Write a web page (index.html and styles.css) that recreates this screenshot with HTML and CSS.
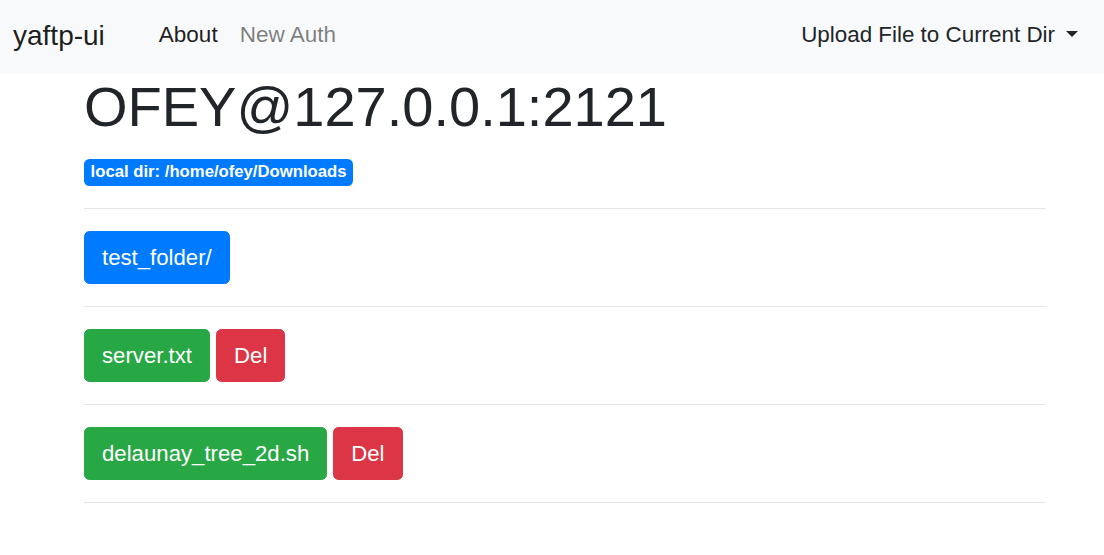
FILE: index.html
```html
<!DOCTYPE html>
<html>
<head>
	<meta charset="utf-8" />
	<title>yaftp-ui</title>
	<link rel="stylesheet" href="styles.css">
</head>
<body>
	<nav class="navbar">
		<a class="brand" href="#">yaftp-ui</a>
		<ul class="nav">
			<li><a class="nav-link active" href="#">About</a></li>
			<li><a class="nav-link" href="#">New Auth</a></li>
		</ul>
		<a class="upload dropdown-toggle" href="#">Upload File to Current Dir</a>
	</nav>
	<div class="main">
		<h1 class="title">OFEY@127.0.0.1:2121</h1>
		<div class="dir-row"><span class="badge">local dir: /home/ofey/Downloads</span></div>
		<hr />
		<div class="row">
			<a class="btn btn-primary" href="#">test_folder/</a>
		</div>
		<hr />
		<div class="row">
			<a class="btn btn-success" href="#">server.txt</a>
			<a class="btn btn-danger" href="#">Del</a>
		</div>
		<hr />
		<div class="row">
			<a class="btn btn-success" href="#">delaunay_tree_2d.sh</a>
			<a class="btn btn-danger" href="#">Del</a>
		</div>
		<hr />
	</div>
</body>
</html>
```

FILE: styles.css
```css
body {
	margin: 0;
	font-family: "Liberation Sans", Arial, sans-serif;
	font-size: 22px;
	line-height: 1.5;
	color: #212529;
	background: #fff;
}

a {
	text-decoration: none;
}

.navbar {
	display: flex;
	align-items: center;
	box-sizing: border-box;
	height: 74px;
	padding: 0 15px 4px 13px;
	background: #f8f9fa;
}

.brand {
	font-size: 28px;
	line-height: 41px;
	color: rgba(0, 0, 0, .9);
	margin-right: 43px;
}

.nav {
	display: flex;
	list-style: none;
	margin: 0;
	padding: 0;
}

.nav-link {
	display: block;
	padding: 0 11px;
	font-size: 22.5px;
	color: rgba(0, 0, 0, .5);
}

.nav-link.active {
	color: rgba(0, 0, 0, .9);
}

.upload {
	margin-left: auto;
	padding: 0 11px;
	font-size: 22.4px;
	color: #212529;
}

.dropdown-toggle::after {
	content: "";
	display: inline-block;
	margin-left: 11px;
	vertical-align: 5px;
	border-top: 6.6px solid;
	border-left: 6.6px solid transparent;
	border-right: 6.6px solid transparent;
}

.main {
	width: 962px;
	padding-left: 84px;
}

.title {
	font-size: 56px;
	font-weight: 500;
	line-height: 66px;
	margin: 0 0 13px;
}

.dir-row {
	line-height: 33px;
}

.badge {
	display: inline-block;
	font-size: 16.7px;
	font-weight: bold;
	line-height: 1;
	padding: 5px 6.6px;
	border-radius: 5.5px;
	color: #fff;
	background: #007bff;
}

hr {
	margin: 22px 0;
	border: 0;
	border-top: 1px solid rgba(0, 0, 0, .1);
}

.row {
	display: flex;
	gap: 6px;
}

.btn {
	display: inline-block;
	font-size: 22.2px;
	line-height: 33px;
	padding: 9px 17px;
	border: 1px solid transparent;
	border-radius: 5.5px;
	color: #fff;
}

.btn-primary {
	background: #007bff;
	border-color: #007bff;
}

.btn-success {
	background: #28a745;
	border-color: #28a745;
}

.btn-danger {
	background: #dc3545;
	border-color: #dc3545;
}
```
